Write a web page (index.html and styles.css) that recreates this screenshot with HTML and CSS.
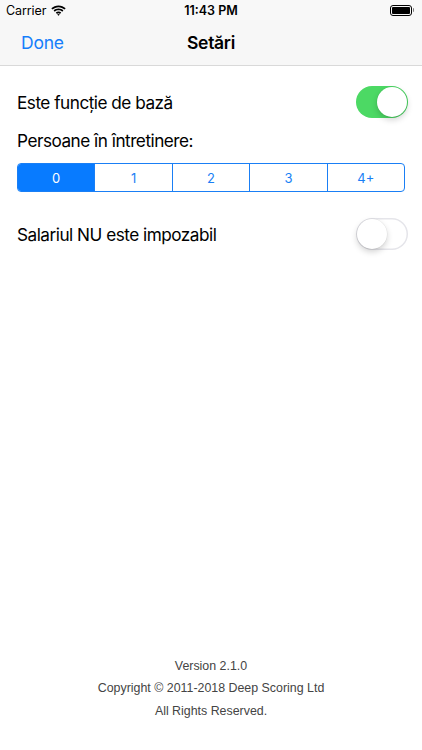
FILE: index.html
```html
<!DOCTYPE html>
<html lang="ro">
<head>
<meta charset="utf-8">
<title>Setări</title>
<link rel="stylesheet" href="styles.css">
</head>
<body>
<div class="screen">
  <div class="status">
    <div class="status-left">
      <span class="carrier">Carrier</span>
      <svg class="wifi" width="15" height="11" viewBox="0 0 15 11">
        <path d="M7.5 2.2c2.3 0 4.4.9 6 2.4l1.2-1.3C12.8 1.5 10.3.4 7.5.4S2.2 1.5.3 3.3l1.2 1.3c1.6-1.5 3.7-2.4 6-2.4z" fill="#000"/>
        <path d="M7.5 5.3c1.4 0 2.7.5 3.7 1.4l1.2-1.3C11.1 4.2 9.4 3.5 7.5 3.5S3.9 4.2 2.6 5.4l1.2 1.3c1-.9 2.3-1.4 3.7-1.4z" fill="#000"/>
        <path d="M7.5 8.3c.6 0 1.1.2 1.5.6l1.2-1.3c-.7-.7-1.7-1.1-2.7-1.1s-2 .4-2.7 1.1L6 8.9c.4-.4.9-.6 1.5-.6zM7.5 10.8l1.3-1.3c-.3-.3-.8-.5-1.3-.5s-1 .2-1.3.5z" fill="#000"/>
      </svg>
    </div>
    <div class="clock">11:43 PM</div>
    <div class="status-right">
      <div class="battery"><div class="battery-fill"></div></div>
      <div class="battery-nub"></div>
    </div>
  </div>
  <div class="navbar">
    <span class="nav-done">Done</span>
    <span class="nav-title">Setări</span>
    <span class="nav-spacer"></span>
  </div>
  <div class="content">
    <div class="row row-switch">
      <span class="label">Este funcţie de bază</span>
      <span class="switch switch-on"><span class="knob"></span></span>
    </div>
    <div class="row row-heading">
      <span class="label">Persoane în întretinere:</span>
    </div>
    <div class="segmented">
      <span class="seg seg-active">0</span>
      <span class="seg">1</span>
      <span class="seg">2</span>
      <span class="seg">3</span>
      <span class="seg">4+</span>
    </div>
    <div class="row row-switch row-switch2">
      <span class="label">Salariul NU este impozabil</span>
      <span class="switch"><span class="knob"></span></span>
    </div>
  </div>
  <div class="footer">
    <div class="footer-line">Version 2.1.0</div>
    <div class="footer-line">Copyright © 2011-2018 Deep Scoring Ltd</div>
    <div class="footer-line">All Rights Reserved.</div>
  </div>
</div>
</body>
</html>
```
FILE: styles.css
```css
* { box-sizing: border-box; }
html, body { margin: 0; padding: 0; background: #fff; }
body { font-family: Inter, "Liberation Sans", Arial, sans-serif; color: #000; }
.screen { width: 422px; height: 750px; display: flex; flex-direction: column; overflow: hidden; }

.status { height: 20px; display: flex; align-items: center; justify-content: space-between; padding: 0 8px 0 6px; background: #f8f8f8; font-size: 12.5px; position: relative; }
.status-left { display: flex; align-items: center; gap: 5px; flex: 1; }
.carrier { font-size: 12.5px; letter-spacing: -0.1px; }
.clock { font-weight: 600; font-size: 12.5px; position: absolute; left: 0; right: 0; text-align: center; }
.status-right { display: flex; align-items: center; flex: 1; justify-content: flex-end; }
.battery { width: 22px; height: 11px; border: 1px solid #000; border-radius: 3px; padding: 1px; }
.battery-fill { width: 100%; height: 100%; background: #000; border-radius: 1px; }
.battery-nub { width: 1.5px; height: 4px; background: #000; border-radius: 0 1px 1px 0; margin-left: 1px; opacity: 0.5; }

.navbar { height: 46px; background: #f7f7f7; border-bottom: 1px solid #d9d9d9; display: flex; align-items: center; justify-content: space-between; padding: 0 21px; }
.nav-done { color: #157efb; font-size: 17.5px; width: 80px; letter-spacing: -0.2px; }
.nav-title { font-weight: 600; font-size: 17.5px; letter-spacing: -0.3px; }
.nav-spacer { width: 80px; }

.content { display: flex; flex-direction: column; padding: 0 17px; }
.row { display: flex; align-items: center; justify-content: space-between; }
.label { font-size: 17.2px; letter-spacing: -0.5px; }
.row-switch { height: 32px; margin-top: 20px; }
.row-heading { margin-top: 10px; height: 24px; }
.row-switch2 { margin-top: 26px; }

.switch { width: 52px; height: 32px; border-radius: 16px; background: #fff; box-shadow: inset 0 0 0 1.5px #e5e5ea; position: relative; margin-right: -3px; }
.switch-on { background: #4cd964; box-shadow: none; }
.knob { position: absolute; top: 1px; left: 1px; width: 30px; height: 30px; border-radius: 50%; background: #fff; box-shadow: 0 3px 6px rgba(0,0,0,0.18), 0 0 0 0.5px rgba(0,0,0,0.06); }
.switch-on .knob { left: 21px; }

.segmented { margin-top: 11px; height: 29px; display: flex; border: 1px solid #1a7ff5; border-radius: 4px; overflow: hidden; }
.seg { flex: 1; display: flex; align-items: center; justify-content: center; color: #1a7ff5; font-size: 13px; border-left: 1px solid #1a7ff5; }
.seg:first-child { border-left: none; }
.seg-active { background: #087bff; color: #fff; }

.footer { margin-top: auto; padding-bottom: 28px; display: flex; flex-direction: column; align-items: center; font-family: "Liberation Sans", Arial, sans-serif; }
.footer-line { font-size: 12.4px; color: #444; line-height: 22.5px; }
```
